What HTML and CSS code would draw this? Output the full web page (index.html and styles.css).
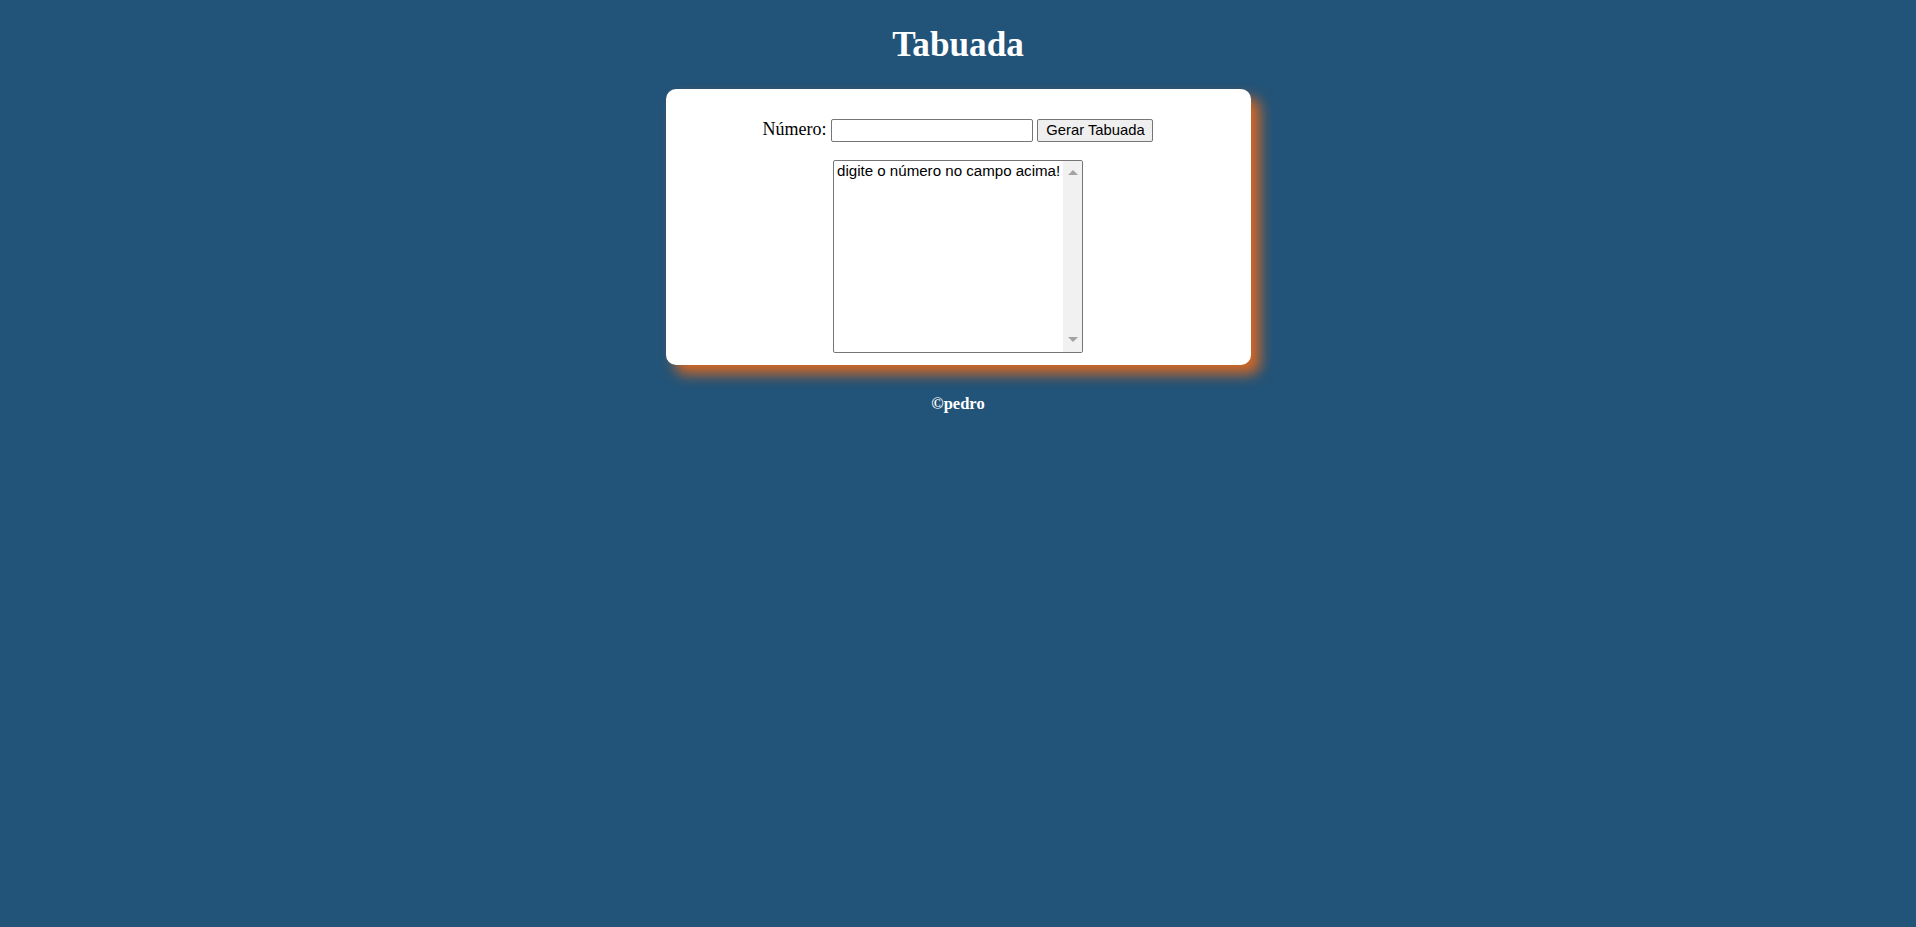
FILE: index.html
```html
<!DOCTYPE html>
<html lang="pt-BR">
<head>
<meta charset="utf-8">
<title>Tabuada</title>
<link rel="stylesheet" href="styles.css">
</head>
<body>
<header class="top">
  <h1 class="title">Tabuada</h1>
</header>
<section class="card">
  <div class="row">
    <label class="label" for="txtn">Número:</label>
    <input class="field" type="text" id="txtn">
    <button class="btn" type="button">Gerar Tabuada</button>
  </div>
  <div class="list-wrap">
    <div class="listbox" role="listbox">
      <div class="options">
        <div class="option" role="option">digite o número no campo acima!</div>
      </div>
      <div class="scrollbar">
        <span class="arrow arrow-up"></span>
        <span class="arrow arrow-down"></span>
      </div>
    </div>
  </div>
</section>
<footer class="foot">
  <p class="copy">&copy;pedro</p>
</footer>
</body>
</html>
```
FILE: styles.css
```css
html, body {
  margin: 0;
  padding: 0;
}
body {
  background: rgb(34, 83, 120);
  font-family: "Liberation Serif", "Times New Roman", serif;
  font-size: 17.6px;
  color: #000;
}
.top {
  text-align: center;
  color: #fff;
}
.title {
  margin: 0;
  padding: 25px 0 25px;
  font-size: 35.2px;
  font-weight: bold;
  line-height: 39px;
}
.card {
  box-sizing: border-box;
  width: 585px;
  height: 276px;
  margin: 0 auto;
  padding: 11px;
  background: #fff;
  border-radius: 10px;
  box-shadow: 9px 9px 14px rgb(214, 104, 36);
}
.row {
  display: flex;
  justify-content: center;
  align-items: center;
  height: 24px;
  margin: 18px 0 18px;
}
.label {
  font-size: 18px;
  margin-right: 5px;
  position: relative;
  top: -1px;
}
.field {
  box-sizing: border-box;
  width: 202px;
  height: 23px;
  margin: 0;
  padding: 1px 3px;
  border: 1px solid #767676;
  border-radius: 2px;
  background: #fff;
  font-family: "Liberation Sans", Arial, sans-serif;
  font-size: 14.6px;
}
.btn {
  box-sizing: border-box;
  width: 116px;
  height: 23px;
  margin: 0 0 0 4px;
  padding: 0 6px;
  border: 1px solid #767676;
  border-radius: 2px;
  background: #efefef;
  color: #000;
  font-family: "Liberation Sans", Arial, sans-serif;
  font-size: 14.8px;
}
.list-wrap {
  display: flex;
  justify-content: center;
}
.listbox {
  box-sizing: border-box;
  display: flex;
  width: 250px;
  height: 193px;
  border: 1px solid #767676;
  border-radius: 2px;
  background: #fff;
  overflow: hidden;
}
.options {
  flex: 1;
}
.option {
  padding: 1px 3px;
  font-family: "Liberation Sans", Arial, sans-serif;
  font-size: 15.1px;
  line-height: 17px;
  white-space: nowrap;
}
.scrollbar {
  width: 20px;
  background: #f1f1f1;
  display: flex;
  flex-direction: column;
  justify-content: space-between;
  align-items: center;
  padding: 9px 0 10px;
  box-sizing: border-box;
}
.arrow {
  width: 0;
  height: 0;
  border-left: 5px solid transparent;
  border-right: 5px solid transparent;
}
.arrow-up {
  border-bottom: 5px solid #a3a3a3;
}
.arrow-down {
  border-top: 5px solid #a3a3a3;
}
.foot {
  text-align: center;
  color: #fff;
}
.copy {
  margin: 29px 0 0;
  font-size: 16.5px;
  font-weight: bold;
}
```
